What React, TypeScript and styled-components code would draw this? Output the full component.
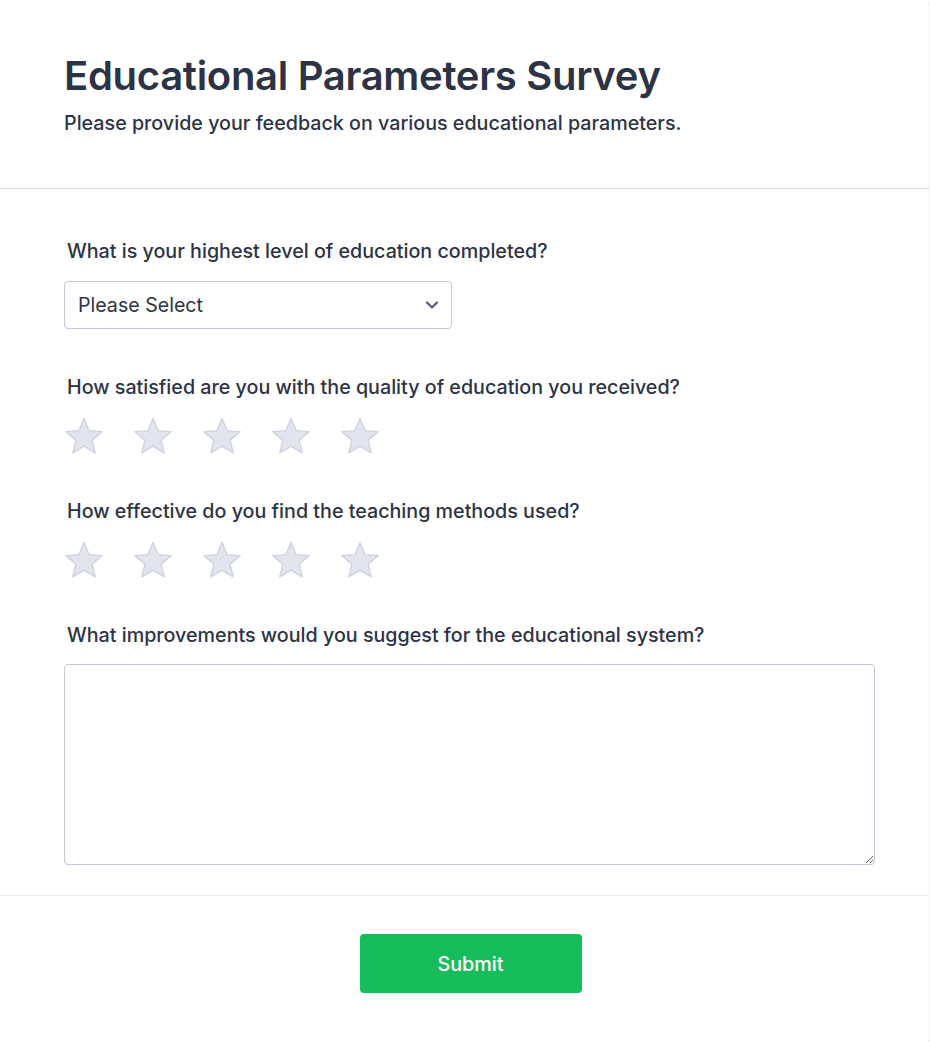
import styled, { createGlobalStyle } from 'styled-components'

const GlobalStyle = createGlobalStyle`
  body {
    margin: 0;
    background: #ffffff;
    font-family: Inter, 'Noto Sans', sans-serif;
    color: #2c3345;
  }
`

const questions = [
  'How satisfied are you with the quality of education you received?',
  'How effective do you find the teaching methods used?',
]

const Star = () => (
  <svg width="40" height="38" viewBox="0 0 40 38">
    <path
      d="M20 1.5L25.03 13.58L38.07 14.63L28.13 23.14L31.17 35.87L20 29.05L8.83 35.87L11.87 23.14L1.93 14.63L14.97 13.58Z"
      fill="#e3e5ee"
      stroke="#cfd3e0"
      strokeWidth="1.4"
      strokeLinejoin="round"
    />
  </svg>
)

export default function App() {
  return (
    <>
      <GlobalStyle />
      <Card>
        <Header>
          <Title>Educational Parameters Survey</Title>
          <Subtitle>
            Please provide your feedback on various educational parameters.
          </Subtitle>
        </Header>

        <Body>
          <Question>
            <Label>What is your highest level of education completed?</Label>
            <Select>
              <span>Please Select</span>
              <svg width="14" height="10" viewBox="0 0 14 10">
                <path
                  d="M2 2.5l5 5 5-5"
                  fill="none"
                  stroke="#57647e"
                  strokeWidth="2.4"
                  strokeLinecap="round"
                  strokeLinejoin="round"
                />
              </svg>
            </Select>
          </Question>

          {questions.map((q) => (
            <Question key={q}>
              <Label>{q}</Label>
              <Stars>
                {[0, 1, 2, 3, 4].map((i) => (
                  <Star key={i} />
                ))}
              </Stars>
            </Question>
          ))}

          <Question>
            <Label>What improvements would you suggest for the educational system?</Label>
            <TextArea />
          </Question>
        </Body>

        <Footer>
          <SubmitButton>Submit</SubmitButton>
        </Footer>
      </Card>
    </>
  )
}

const Card = styled.div`
  width: 929px;
  height: 1042px;
  background: #ffffff;
  border-radius: 3px;
  box-shadow: 1px 1px 2px rgba(80, 80, 120, 0.12);
  display: flex;
  flex-direction: column;
`

const Header = styled.div`
  padding: 52px 64px 51px;
  border-bottom: 1px solid #dcdbeb;
`

const Title = styled.h1`
  margin: 0;
  font-size: 40px;
  line-height: 48px;
  font-weight: 600;
  letter-spacing: -0.3px;
  color: #2c3345;
`

const Subtitle = styled.p`
  margin: 9px 0 0;
  font-size: 19.7px;
  line-height: 28px;
  font-weight: 500;
  color: #2c3345;
`

const Body = styled.div`
  padding: 48px 54px 30px 64px;
  display: flex;
  flex-direction: column;
  gap: 44px;
  border-bottom: 1px solid #ececf3;
`

const Question = styled.div`
  display: flex;
  flex-direction: column;
  gap: 16px;
`

const Label = styled.label`
  padding-left: 3px;
  font-size: 19.7px;
  line-height: 28px;
  font-weight: 500;
  color: #2c3345;
`

const Select = styled.div`
  box-sizing: border-box;
  width: 388px;
  height: 48px;
  padding: 0 12px 0 13px;
  border: 1px solid #c3c6d4;
  border-radius: 4px;
  display: flex;
  align-items: center;
  justify-content: space-between;
  font-size: 19.6px;
  color: #2c3345;
`

const Stars = styled.div`
  display: flex;
  gap: 29px;
  margin-bottom: -2px;
`

const TextArea = styled.textarea`
  box-sizing: border-box;
  width: 811px;
  height: 201px;
  margin-top: -1px;
  border: 1px solid #c3c6d4;
  border-radius: 4px;
  font-family: inherit;
  font-size: 16px;
`

const Footer = styled.div`
  display: flex;
  justify-content: center;
  padding: 38px 0 0 12px;
`

const SubmitButton = styled.button`
  width: 222px;
  height: 59px;
  border: none;
  border-radius: 4px;
  background: #18bd5b;
  color: #ffffff;
  font-family: inherit;
  font-size: 19.8px;
  font-weight: 500;
  cursor: pointer;
`
